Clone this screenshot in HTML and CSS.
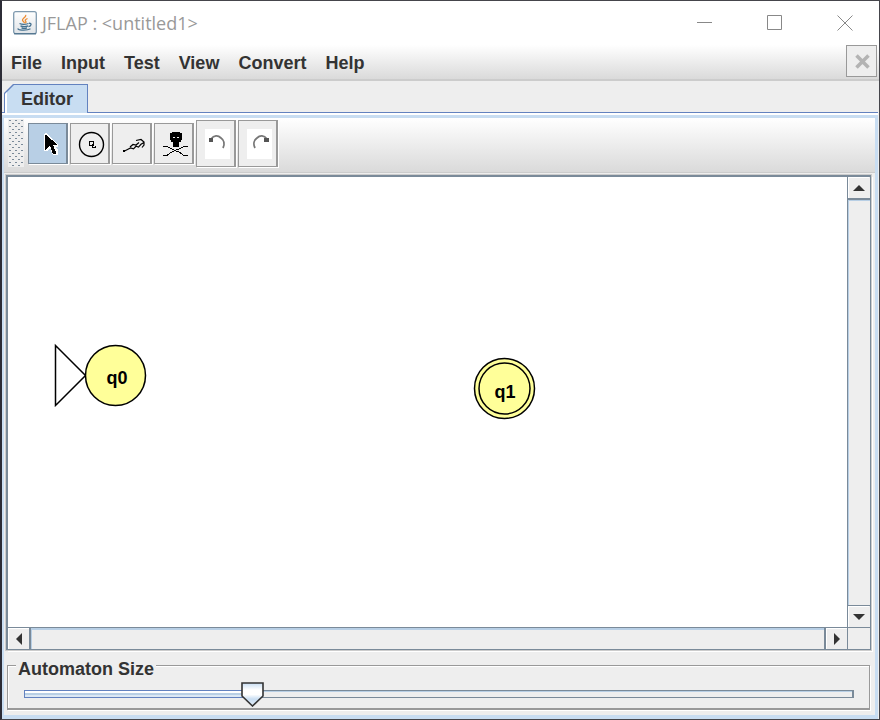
FILE: index.html
```html
<!DOCTYPE html>
<html lang="en">
<head>
<meta charset="utf-8">
<title>JFLAP : &lt;untitled1&gt;</title>
<link rel="stylesheet" href="styles.css">
</head>
<body>
<div class="window">
  <header class="titlebar">
    <svg class="app-icon" width="24" height="24" viewBox="0 0 24 24" aria-hidden="true">
      <defs><linearGradient id="tile" x2="0" y2="1"><stop offset="0" stop-color="#fff"/><stop offset="1" stop-color="#dfe3e7"/></linearGradient></defs>
      <rect x=".7" y=".7" width="22.6" height="22" rx="2" fill="url(#tile)" stroke="#7f9aaf" stroke-width="1.3"/>
      <path d="M1 22.7h22" stroke="#557892" stroke-width="1.4"/>
      <path d="M12.5 4c1.5 2-4 3.500-3 5.500.4 1 2 1.500 2 2.800M14.500 7.500c-3 1.300-2.500 2-1.600 3 .5.6 0 1.200-.6 1.800" fill="none" stroke="#ed8b31" stroke-width="1.3"/>
      <path d="M6.500 12.500c2 1 6 1 9 0M7.500 14.800c2 .9 5.500.9 7.500 0M8.500 16.800c1.500.7 4 .7 5.500 0M16 12.300c3-.4 2.500 2.700-.5 3.200M5.500 17.500c-3 1.500 8 2.500 12 .3" fill="none" stroke="#44708f" stroke-width="1.300"/>
    </svg>
    <h1 class="title">JFLAP : &lt;untitled1&gt;</h1>
    <div class="window-controls">
      <button aria-label="Minimize"><svg width="16" height="16"><path d="M0 7.500h15"/></svg></button>
      <button aria-label="Maximize"><svg width="16" height="16"><path d="M.5.5h14v14h-14z"/></svg></button>
      <button aria-label="Close"><svg width="16" height="16"><path d="M.5.5l15 15M15.500.5l-15 15"/></svg></button>
    </div>
  </header>

  <nav class="menubar">
    <button>File</button><button>Input</button><button>Test</button><button>View</button><button>Convert</button><button>Help</button>
    <button class="dismiss" aria-label="Close editor"><svg width="15" height="15" viewBox="0 0 15 15"><path d="M1.500 1.500l12 12M13.500 1.500l-12 12" stroke="#b3b3b3" stroke-width="3.600"/><path d="M5 5h5v5H5z" fill="#b3b3b3"/></svg></button>
  </nav>

  <div class="tabs"><button class="tab"><span>Editor</span></button></div>

  <main class="editor">
    <div class="toolbar">
      <span class="grip"></span>
      <button class="tool selected" aria-label="Attribute editor">
        <svg width="37" height="38" viewBox="0 0 37 38" shape-rendering="crispEdges"><path d="M15 10v17h3l3-3 3 7h5v-5l-2-3h2v-3L17 9z" fill="#fff"/><path d="M16 11v15h1l3-4h1l3 8h3v-2l-3-7h4v-1L17 11z"/></svg>
      </button>
      <button class="tool" aria-label="State creator">
        <svg width="37" height="38" viewBox="0 0 37 38" fill="none" stroke="#000"><circle cx="20.500" cy="20.500" r="12" stroke-width="1.400"/><path d="M18.500 17.500h4v4h-4zM21.500 20v3.500h3v-2" stroke-width="1.300" shape-rendering="crispEdges"/></svg>
      </button>
      <button class="tool" aria-label="Transition creator">
        <svg width="37" height="38" viewBox="0 0 37 38" fill="none" stroke="#000" stroke-width="1.200"><path d="M10.500 27.500l4-2 3-1.500 3 .8 2.500-2.500 2.500.8 2.500-2.800 3-1.800M17 23l3-2.500 3 .5 3-2.500M23 16.500l5-1 3 2.500v3l-2 2.500"/><path d="M10 26h2v2h-2z" fill="#000" stroke="none"/></svg>
      </button>
      <button class="tool" aria-label="Deleter">
        <svg width="37" height="38" viewBox="0 0 37 38" shape-rendering="crispEdges"><path d="M17 8h8v1h2v7h-1v2h-2v5h-6v-5h-2v-2h-1V9h2z"/><path d="M18 13h2v1h-2zM22 13h2v1h-2z" fill="#eee"/><path d="M8 22.500h4l4 2 4 2 5 2 4 3h4M33 22.500h-4l-4 2-5 2-4 2-4 3H8" fill="none" stroke="#000"/></svg>
      </button>
      <button class="tool tall" aria-label="Undo">
        <svg width="37" height="44" viewBox="0 0 37 44"><path d="M8 8h25v30H8z" fill="#fff"/><path d="M14 18c3-4 7-4 10-1 3 2 4 6 2 10" fill="none" stroke="#777" stroke-width="1.800"/><path d="M12 17h4v4h-4z" fill="#555"/></svg>
      </button>
      <button class="tool tall" aria-label="Redo">
        <svg width="37" height="44" viewBox="0 0 37 44"><path d="M8 8h25v30H8z" fill="#fff"/><path d="M28 18c-3-4-7-4-10-1-3 2-4 6-2 10" fill="none" stroke="#777" stroke-width="1.800"/><path d="M25 17h5v4h-5z" fill="#555"/></svg>
      </button>
    </div>

    <section class="scrollpane">
      <div class="canvas">
        <svg width="100%" height="100%" aria-label="Automaton">
          <g stroke="#000" stroke-width="1.500" fill="#ff9">
            <path d="M47.500 168.500v60l30-30z" fill="#fff"/>
            <circle cx="107.500" cy="198.500" r="30"/>
            <circle cx="496.500" cy="211.500" r="30"/>
            <circle cx="496.500" cy="211.500" r="25.500"/>
          </g>
          <text x="109" y="207">q0</text>
          <text x="497" y="221">q1</text>
        </svg>
      </div>
      <div class="scrollbar vertical">
        <button aria-label="Scroll up"><svg width="12" height="6"><path d="M6 0l6 6H0z"/></svg></button>
        <div class="thumb"></div>
        <button aria-label="Scroll down"><svg width="12" height="6"><path d="M0 0h12L6 6z"/></svg></button>
      </div>
      <div class="scrollbar horizontal">
        <button aria-label="Scroll left"><svg width="6" height="12"><path d="M6 0v12L0 6z"/></svg></button>
        <div class="thumb"></div>
        <button aria-label="Scroll right"><svg width="6" height="12"><path d="M0 0l6 6-6 6z"/></svg></button>
      </div>
      <div class="corner"></div>
    </section>

    <div class="size-panel">
      <label for="size">Automaton Size</label>
      <input id="size" type="range" min="0" max="1000" value="269">
    </div>
  </main>
</div>
</body>
</html>
```
FILE: styles.css
```css
* { box-sizing: border-box; }
body { margin: 0; font: bold 18px/22px "Liberation Sans", Arial, sans-serif; color: #333; }
button { font: inherit; color: inherit; border: 0; padding: 0; background: none; }
svg { display: block; }

.window {
  height: 100vh;
  display: flex;
  flex-direction: column;
  border: 1px solid #45454b;
  border-left: 2px solid #2c2c36;
  background: #eee;
}

.titlebar { height: 44px; flex: none; display: flex; align-items: center; padding-left: 11px; background: #fff; }
.title { margin: 0 0 0 5px; font: 18px/24px "Open Sans", "Noto Sans", sans-serif; color: #999; }
.window-controls { margin-left: auto; display: flex; height: 100%; }
.window-controls button { width: 70px; padding-left: 2px; display: grid; place-items: center; }
.window-controls path { fill: none; stroke: #888; }

.menubar {
  height: 36px;
  flex: none;
  display: flex;
  align-items: stretch;
  gap: 1px;
  border-bottom: 2px solid #ccc;
  background: linear-gradient(#fff, #dadada);
}
.menubar button { padding: 2px 9px 0; }
.menubar .dismiss {
  width: 31px;
  height: 32px;
  margin: 0 2px 0 auto;
  padding: 0 0 0 2px;
  display: grid;
  place-items: center;
  border: 1px solid #999;
  background: #eee;
}

.tabs { position: relative; z-index: 1; height: 31px; flex: none; padding: 3px 0 0 2px; }
.tab {
  width: 84px;
  height: 29px;
  padding: 1px 1px 0;
  background: #6382bf;
  clip-path: polygon(9px 0, 100% 0, 100% 100%, 0 100%, 0 9px);
}
.tab span {
  display: block;
  height: 28px;
  padding-top: 3px;
  border-left: 2px solid #fff;
  background: #c8ddf2;
  clip-path: polygon(9px 0, 100% 0, 100% 100%, 0 100%, 0 9px);
}

.editor {
  flex: 1;
  min-height: 0;
  display: flex;
  flex-direction: column;
  margin: 3px 1px 0 0;
  border: solid #c8ddf2;
  border-width: 3px 3px 4px 2px;
  box-shadow: 0 -2px #fff, 0 -3px #6382bf;
}

.toolbar {
  height: 55px;
  flex: none;
  display: flex;
  align-items: center;
  gap: 2px;
  padding: 0 0 4px 4px;
  border-bottom: 1px solid #ccc;
  background: linear-gradient(#fff, #dadada);
}
.grip {
  width: 16px;
  height: 48px;
  margin-right: 2px;
  background:
    conic-gradient(from 270deg at 2px 1px, #7a8a99 90deg, transparent 0) 1px 1px / 6px 6px,
    conic-gradient(from 270deg at 2px 1px, #7a8a99 90deg, transparent 0) 4px 4px / 6px 6px,
    #eee;
}
.tool {
  width: 40px;
  height: 41px;
  border: 1px solid #999;
  border-right-width: 2px;
  background: #eee;
  box-shadow: 1px 1px #fff;
}
.tool.tall { height: 47px; }
.tool.selected { border-color: #7a8a99; background: #b8cfe5; }

.scrollpane {
  flex: 1;
  min-height: 0;
  display: grid;
  grid-template: 1fr 22px / 1fr 23px;
  margin: 2px 4px 4px 2px;
  border: 2px solid #7a8a99;
  border-width: 2px 1px 1px 2px;
  box-shadow: 0 0 0 1px #ccc, 2px 2px #fff;
}
.canvas { background: #fff; min-width: 0; min-height: 0; }
.canvas text { font: bold 18px "Liberation Sans", Arial, sans-serif; text-anchor: middle; }
.scrollbar { display: flex; }
.scrollbar button { flex: none; width: 21px; height: 21px; display: grid; place-items: center; border: solid #fff; border-width: 1px 0 0 1px; }
.scrollbar path { fill: #333; }
.scrollbar .thumb { flex: 1; }
.vertical { flex-direction: column; border-left: 1px solid #7a8a99; }
.vertical .thumb { border-top: 2px solid #7a8a99; border-bottom: 1px solid #7a8a99; box-shadow: inset 1px 1px #b8cfe5; }
.horizontal { border-top: 1px solid #7a8a99; }
.horizontal .thumb { border: solid #7a8a99; border-width: 0 2px; box-shadow: inset 1px 2px #b8cfe5; }
.corner { border: solid #7a8a99; border-width: 1px 0 0 1px; }

.size-panel {
  flex: none;
  height: 45px;
  margin: 11px 5px 5px 3px;
  padding: 0 15px 0 16px;
  border: 1px solid #999;
  border-bottom-width: 2px;
  box-shadow: 1px 1px #fff, inset 1px 1px #fff;
}
.size-panel label {
  display: block;
  width: max-content;
  height: 18px;
  margin: -8px 0 0 -8px;
  padding: 0 2px;
  line-height: 22px;
  background: #eee;
}
#size {
  appearance: none;
  display: block;
  width: 100%;
  height: 24px;
  margin: 6px 0 0;
  background: none;
}
#size::-webkit-slider-runnable-track {
  height: 8px;
  background:
    linear-gradient(#6382bf, #6382bf) 0 0 / 1px 100% no-repeat,
    linear-gradient(#6382bf 1px, #fff 1px 3px, #b8cfe5 3px 5px, #dce8f4 5px 7px, #6382bf 7px) 0 0 / 28% 100% no-repeat,
    linear-gradient(#7a8a99, #7a8a99) 100% 0 / 2px 100% no-repeat,
    linear-gradient(#7a8a99 1px, #b8cfe5 1px 2px, #eee 2px 7px, #7a8a99 7px);
}
#size::-webkit-slider-thumb {
  appearance: none;
  width: 23px;
  height: 25px;
  margin-top: -8px;
  background: url("data:image/svg+xml,%3Csvg xmlns='http://www.w3.org/2000/svg' width='23' height='25'%3E%3Cdefs%3E%3ClinearGradient id='g' x2='0' y2='1'%3E%3Cstop stop-color='%23c8ddf2'/%3E%3Cstop offset='.3' stop-color='%23fff'/%3E%3Cstop offset='.5' stop-color='%23fff'/%3E%3Cstop offset='.7' stop-color='%23c8ddf2'/%3E%3Cstop offset='1' stop-color='%23e4eef8'/%3E%3C/linearGradient%3E%3C/defs%3E%3Cpath d='M1 1h21v13L11.500 24 1 14z' fill='url(%23g)' stroke='%23333' stroke-width='1.600'/%3E%3C/svg%3E");
}
```
